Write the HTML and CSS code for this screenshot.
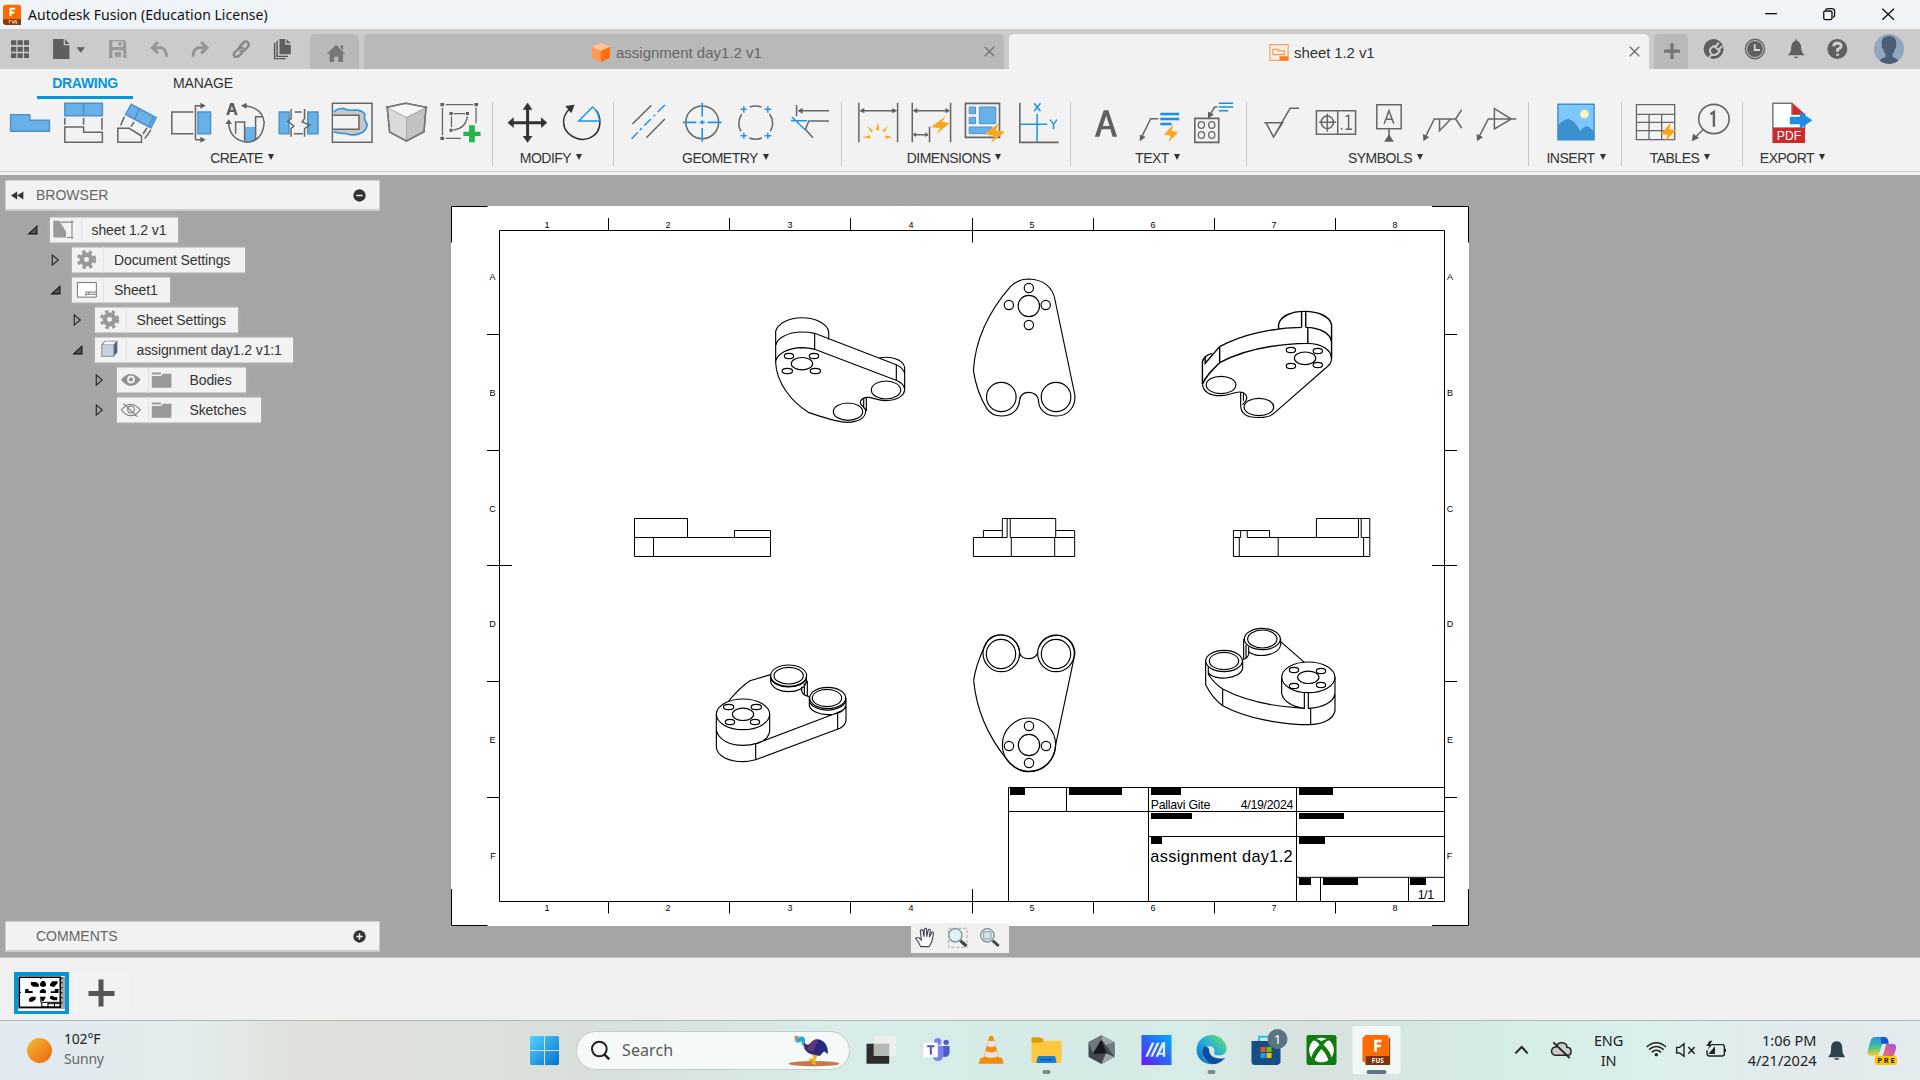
FILE: index.html
```html
<!DOCTYPE html>
<html lang="en">
<head>
<meta charset="utf-8">
<title>Autodesk Fusion (Education License)</title>
<link rel="stylesheet" href="styles.css">
</head>
<body>
<header class="titlebar">
  <svg class="ic app" viewBox="8 10 43 62" preserveAspectRatio="none"><path class="n" fill="#ff6a00" d="M8 16L14 12H46Q51 12 51 17V68Q51 72 46 72H14L8 66Z"/><path class="n" fill="#8a3b08" d="M13 54H51V72H13L8 67V56Z"/><path stroke="#fff" stroke-width="2" d="M26 46V24H37M26 35H35"/><path stroke="#e9c9b4" stroke-width="1" d="M23 58V67M23 59H28M31 58V66H35V58M41 59H38V63H41V67H38"/></svg>
  <span class="title">Autodesk Fusion (Education License)</span>
  <svg class="ic wc" viewBox="1157.6 0 133.7 87" preserveAspectRatio="none"><path d="M1211 41H1238"/></svg>
  <svg class="ic wc" viewBox="1291.3 0 133.7 87" preserveAspectRatio="none"><rect x="1346" y="33" width="19" height="26" rx="4"/><path d="M1350 30Q1351 26 1356 26H1364Q1371 26 1371 34V46Q1371 51 1367 53"/></svg>
  <svg class="ic wc" viewBox="1425 0 133.7 87" preserveAspectRatio="none"><path d="M1481 26L1508 59M1508 26L1481 59"/></svg>
</header>

<nav class="tabbar">
  <svg class="ic q" style="width:40px" viewBox="0 87 98 120" preserveAspectRatio="none"><g class="n dk"><path d="M27 121h13v14H27zM43 121h13v14H43zM59 121h12v14H59zM27 140h13v15H27zM43 140h13v15H43zM59 140h12v15H59zM27 160h13v14H27zM43 160h13v14H43zM59 160h12v14H59z"/></g></svg>
  <svg class="ic q" style="width:56px" viewBox="98 87 137 120" preserveAspectRatio="none"><path class="n dk" d="M130 117H156V136H170V177H130ZM159 117L170 132H159ZM187 142H208L198 158Z"/></svg>
  <svg class="ic q" style="width:43px" viewBox="235 87 105 120" preserveAspectRatio="none"><path class="n" fill="#999" fill-rule="evenodd" d="M267 120H304L309 127V174H267ZM275 124V141H301V124ZM275 151V174H302V151ZM290 126H297V138H290ZM281 156H296V170H281Z"/></svg>
  <svg class="ic q" style="width:41px" viewBox="340 87 100 120" preserveAspectRatio="none"><path stroke="#959595" stroke-width="3" d="M386 126L373 143L386 160M374 143H394Q407 148 407 170"/></svg>
  <svg class="ic q" style="width:40px" viewBox="441 87 98 120" preserveAspectRatio="none"><path stroke="#959595" stroke-width="3" d="M493 126L507 143L493 160M506 143H486Q473 148 473 170"/></svg>
  <svg class="ic q" style="width:42px" viewBox="539 87 103 120" preserveAspectRatio="none"><path stroke="#888" stroke-width="2.4" d="M586 141L597 127Q603 122 608 128Q612 134 607 141L598 152Q592 157 587 150M597 147Q592 139 585 145L576 156Q570 163 575 169Q581 173 586 167L594 157"/></svg>
  <svg class="ic q" style="width:48px" viewBox="642 87 118 120" preserveAspectRatio="none"><path class="n dk" d="M685 117H699V134H713V163H685ZM702 117L713 130H702Z"/><path stroke="#555" stroke-width="1.4" d="M679 122V169H706M673 128V176H700"/></svg>
  <div class="tab home"><svg class="ic q" style="width:49px" viewBox="759 87 120 120" preserveAspectRatio="none"><path class="n" fill="#777" d="M823 134L845 161H840V186H828V170H818V186H807V161H800ZM834 136H840V150L834 144Z"/></svg></div>
  <div class="tab t1"><svg class="ic cube" viewBox="1451 131 43 57" preserveAspectRatio="none"><path class="n" fill="#ffc49a" d="M1451 143L1472 131L1494 143L1472 155Z"/><path class="n" fill="#ff9a50" d="M1451 143L1472 155V188L1451 175Z"/><path class="n" fill="#ff6d05" d="M1494 143L1472 155V188L1494 175Z"/></svg><span>assignment day1.2 v1</span><svg class="ic x" viewBox="0 0 12 12"><path d="M.8.8L11.2 11.2M11.2.8L.8 11.2"/></svg></div>
  <div class="tab t2"><svg class="ic sheet" viewBox="67 134 46 50" preserveAspectRatio="none"><rect x="69" y="136" width="42" height="46" fill="#fbeee4" stroke="#f7a267" stroke-width="1.2"/><path stroke="#f39a55" stroke-width="1.2" d="M76 150H88V154H102V165H76Z"/><path class="n" fill="#ff7d1e" d="M91 170H111V182H91Z"/></svg><span>sheet 1.2 v1</span><svg class="ic x" viewBox="0 0 12 12"><path d="M.8.8L11.2 11.2M11.2.8L.8 11.2"/></svg></div>
  <div class="tab plus"><svg class="ic q" style="width:34px" viewBox="955 87 78.4 120" preserveAspectRatio="none"><path stroke="#777" stroke-width="3.4" d="M978 153.500H1015M996.500 130V177"/></svg></div>
  <svg class="ic q first" style="width:42px" viewBox="1044.6 87 96.8 120" preserveAspectRatio="none"><ellipse class="n dk" cx="1092" cy="147" rx="23" ry="30"/><path stroke="#cbcbcb" stroke-width="2" d="M1078 178L1088 163Q1080 153 1086 144L1093 138L1106 153L1101 161Q1094 168 1088 163M1096 141L1104 128M1103 150L1112 138"/></svg>
  <svg class="ic q" style="width:41px" viewBox="1141.500 87 94.5 120" preserveAspectRatio="none"><ellipse cx="1187.500" cy="147" rx="22" ry="29" stroke="#666"/><ellipse class="n dk" cx="1187.500" cy="147" rx="18" ry="24"/><path stroke="#d8d8d8" stroke-width="1.8" d="M1187 133V150H1199"/></svg>
  <svg class="ic q" style="width:41px" viewBox="1236 87 94.5 120" preserveAspectRatio="none"><path class="n dk" d="M1263 166Q1271 158 1271 142Q1272 125 1280 123Q1280 118 1282.500 118Q1285 118 1285 123Q1293 126 1294 142Q1294 158 1302 166ZM1277 170H1288Q1283 180 1277 170Z"/></svg>
  <svg class="ic q" style="width:41px" viewBox="1330.6 87 94.5 120" preserveAspectRatio="none"><ellipse class="n dk" cx="1377.500" cy="147" rx="23" ry="30"/><path stroke="#d0d0d0" stroke-width="3" d="M1369 139Q1370 129 1378 129Q1387 130 1386 139Q1385 145 1378 149V155M1378 161V167"/></svg>
  <svg class="ic avatar" viewBox="0 0 30 30"><defs><clipPath id="av"><circle cx="15" cy="15" r="15"/></clipPath></defs><circle class="n" cx="15" cy="15" r="15" fill="#91a6bf"/><g clip-path="url(#av)"><path class="n" fill="#4c5d76" d="M15 2C21 2 23 6 22 11Q23 14 21 15Q20 19 18.500 20V23Q25 25 27 31H3Q5 25 11.500 23V20Q10 19 9 15Q7 14 8 11C7 6 9 2 15 2Z"/></g></svg>
</nav>

<section class="ribbon">
  <div class="modes"><span class="mode on">DRAWING</span><span class="mode">MANAGE</span></div>
  <div class="groups">
    <div class="group g-create"><div class="icons">
      <svg class="ic" viewBox="24.5 306 98 126" preserveAspectRatio="none"><path fill="#67b0e8" stroke="#4f93c6" d="M26 344H73V361H121V394H26Z"/></svg>
      <svg class="ic" viewBox="156 306 98 126" preserveAspectRatio="none"><path fill="#67b0e8" stroke="#4f93c6" d="M158 310H250V347H158ZM204 310V347"/><path d="M158 354V374M204 354V374M249 354V389M158 381H204V397H250V427H158Z"/></svg>
      <svg class="ic" viewBox="288 306 98 126" preserveAspectRatio="none"><path fill="#67b0e8" stroke="#4f93c6" d="M323 313L384 353L371 384L309 343ZM343 326L331 358M378 350L366 379"/><path d="M306 350L297 376M330 366L322 380M361 384L352 402M371 390L356 416M290 385H318L348 408V427H290Z"/></svg>
      <svg class="ic" viewBox="419 306 98 126" preserveAspectRatio="none"><path fill="#67b0e8" stroke="#4f93c6" d="M485 336H516V401H485Z"/><path d="M474 336H421V401H474M479 419V317H493M479 419H493"/><path class="n dk" d="M491 308L504 317L491 326ZM491 410L504 419L491 428Z"/></svg>
      <svg class="ic" viewBox="551 306 98 126" preserveAspectRatio="none"><path class="n" fill="#67b0e8" d="M599 381H626V422Q613 430 599 424Z"/><path d="M599 423V366H577V401M626 421V350H643M601 317Q643 324 647 367Q645 423 604 427Q562 418 560 370"/><path class="n dk" d="M604 308L590 317L604 326ZM552 372L560 358L568 372ZM554 345L564 309H572L582 345H575L573 336H563L561 345ZM565 329H571L568 317Z"/></svg>
      <svg class="ic" viewBox="682 306 98 126" preserveAspectRatio="none"><path fill="#67b0e8" stroke="#4f93c6" d="M685 336H709V401H685ZM755 336H780V401H755Z"/><path d="M714 327V356L706 364L721 378L714 385V410M747 327V356L741 366L760 375L747 386V410M723 336H740M721 401H743"/></svg>
      <svg class="ic" viewBox="814 306 98 126" preserveAspectRatio="none"><rect x="815" y="310" width="97" height="117"/><path fill="#c8c8c8" stroke="#2793e6" stroke-width="1.6" d="M818 336Q829 324 844 326Q856 333 870 330Q890 330 895 345Q890 354 900 372Q900 384 892 394Q872 411 850 401Q830 400 818 396"/><path fill="#f2f2f2" d="M817 346H880V388H817"/></svg>
      <svg class="ic" viewBox="945 306 98 126" preserveAspectRatio="none"><path fill="#f7f7f7" d="M948 322L993 310L1043 322L995 353Z"/><path fill="#d9d9d9" d="M948 322L995 353V423L954 396Z"/><path fill="#bdbdbd" d="M1043 322L995 353V423L1038 395Z"/><path class="n" fill="#f7f7f7" d="M950 323L993 312L1041 323L995 352Z"/><path class="n" fill="#dadada" d="M950 324L995 353V421L956 396Z"/><path class="n" fill="#c2c2c2" d="M1041 324L995 353V421L1036 395Z"/><path stroke="#777" d="M948 322L993 310L1043 322L1038 395L995 423L954 396Z"/></svg>
      <svg class="ic" viewBox="1077 306 105 126" preserveAspectRatio="none" style="width:43px"><path d="M1091 314H1158M1083 323V406M1091 415H1128M1165 323V370M1105 349V381M1110 341H1138M1144 349Q1140 385 1110 390" stroke-width="1.3"/><path class="n dk" d="M1078 309h9v10h-9zM1161 309h9v10h-9zM1078 410h9v10h-9zM1100 336h8v9h-8zM1140 336h8v9h-8zM1100 386h8v9h-8z"/><path class="n" fill="#27b24a" d="M1148 376H1162V395H1176V408H1162V427H1148V408H1134V395H1148Z"/></svg>
    </div><span class="label">CREATE</span></div>
    <div class="group g-modify"><div class="icons">
      <svg class="ic" viewBox="1245 306 98 126" preserveAspectRatio="none"><path stroke="#333" stroke-width="3" d="M1254 368H1332M1293 322V414"/><path class="n" fill="#333" d="M1293 308L1305 329H1281ZM1293 428L1305 408H1281ZM1244 368L1259 352V384ZM1341 368L1326 352V384Z"/></svg>
      <svg class="ic" viewBox="1376 306 98 126" preserveAspectRatio="none"><path stroke="#333" stroke-width="1.6" d="M1459 330C1472 350 1475 390 1450 410C1425 430 1390 410 1382 382C1376 355 1385 335 1397 325"/><path class="n" fill="#333" d="M1384 318L1407 314L1399 340Z"/><path stroke="#1f93ea" d="M1451 321L1417 363H1468Q1466 335 1451 321Z"/></svg>
    </div><span class="label">MODIFY</span></div>
    <div class="group g-geo"><div class="icons">
      <svg class="ic" viewBox="66.5 306 95 126" preserveAspectRatio="none"><path d="M77 372L122 316M110 413L154 357"/><path stroke="#1f93ea" stroke-width="1.500" d="M75 416L90 397M95 390L99 384M105 377L121 357M127 349L131 344M137 336L154 315"/></svg>
      <svg class="ic" viewBox="194 306 95 126" preserveAspectRatio="none"><ellipse cx="242" cy="367" rx="39" ry="49"/><path stroke="#1f93ea" stroke-width="1.6" d="M242 308V350M242 361V373M242 384V425M196 367H228M236 367H248M255 367H288"/></svg>
      <svg class="ic" viewBox="322 306 95 126" preserveAspectRatio="none"><path d="M357 321Q371 315 385 321M404 342Q418 368 406 394M386 414Q371 421 356 414M336 394Q325 368 338 342"/><path stroke="#1f93ea" d="M343 319V338M335 328H350M400 319V338M392 328H408M343 398V416M335 407H350M400 398V416M392 407H408"/></svg>
      <svg class="ic" viewBox="449 306 95 126" preserveAspectRatio="none"><path d="M467 315V349M472 332H544M544 363H496L488 388L506 413"/><path class="n dk" d="M470 332L481 323V341Z"/><path stroke="#1f93ea" d="M454 362H492M456 351L487 389"/></svg>
    </div><span class="label">GEOMETRY</span></div>
    <div class="group g-dim"><div class="icons">
      <svg class="ic" viewBox="612 306 95 126" preserveAspectRatio="none"><path d="M614 308V427M706 308V427M622 332H698"/><path class="n dk" d="M615 332L627 324V340ZM705 332L693 324V340Z"/><path class="n" fill="#faa61a" d="M655 391L659 366L663 391ZM634 377L648 392L643 397ZM684 377L669 392L674 397ZM623 412L641 406V416ZM694 412L677 406V416Z"/></svg>
      <svg class="ic" viewBox="739 306 95 126" preserveAspectRatio="none"><path d="M742 308V427M833 308V427M783 380V427M750 332H826M748 404H778"/><path class="n dk" d="M743 332L754 324V340ZM832 332L821 324V340ZM743 404L751 397V411ZM781 404L773 397V411Z"/><path class="n" fill="#faa61a" d="M822 348L786 382L808 384L799 403L831 369L812 366Z"/></svg>
      <svg class="ic" viewBox="867 306 95 126" preserveAspectRatio="none"><rect x="868" y="310" width="81" height="102" stroke-width="1.6"/><path fill="#67b0e8" stroke="#4f93c6" stroke-width="1" d="M877 321H892V341H877ZM901 321H940V371H901ZM877 352H892V371H877ZM877 381H932L918 401H877Z"/><path class="n" fill="#faa61a" d="M948 369L913 402L936 407L929 428L962 395L940 391Z"/></svg>
      <svg class="ic" viewBox="995 306 95 126" preserveAspectRatio="none"><path d="M997 308V427H1089" stroke-width="1.6"/><path stroke="#1f93ea" stroke-width="1.500" d="M1038 342V427M998 373H1062M1031 310L1046 334M1046 310L1031 334M1069 359L1077 373L1085 359M1077 373V388"/></svg>
    </div><span class="label">DIMENSIONS</span></div>
    <div class="group g-text"><div class="icons">
      <svg class="ic" viewBox="1155 306 95 126" preserveAspectRatio="none"><path class="n dk" fill-rule="evenodd" d="M1176 410L1197 331H1208L1229 410H1218L1213 388H1192L1187 410ZM1195 378H1211L1203 347Z"/></svg>
      <svg class="ic" viewBox="1282 306 98 126" preserveAspectRatio="none" style="width:41px"><path d="M1288 412L1310 356H1328"/><path class="n dk" d="M1284 424L1284 404L1298 411Z"/><path stroke="#1192ee" stroke-width="2.300" d="M1333 342H1378M1333 357H1378M1333 372H1360"/><path class="n" fill="#faa61a" d="M1364 373L1342 404L1358 407L1352 427L1376 396L1360 393Z"/></svg>
      <svg class="ic" viewBox="1410 306 97 126" preserveAspectRatio="none"><rect x="1412" y="355" width="58" height="72" stroke-width="1.6"/><g stroke-width="1.300"><ellipse cx="1428" cy="375" rx="7.500" ry="10"/><ellipse cx="1453" cy="375" rx="7.500" ry="10"/><ellipse cx="1428" cy="405" rx="7.500" ry="10"/><ellipse cx="1453" cy="405" rx="7.500" ry="10"/></g><path d="M1449 344L1460 321H1467"/><path class="n dk" d="M1444 356L1444 335L1458 343Z"/><path stroke="#1192ee" d="M1470 310H1505M1470 321H1505M1470 332H1493"/></svg>
    </div><span class="label">TEXT</span></div>
    <div class="group g-sym"><div class="icons">
      <svg class="ic" viewBox="49.6 306 92 126" preserveAspectRatio="none"><path d="M55 368H97L76 411L60 371M76 411L114 325H135"/></svg>
      <svg class="ic" viewBox="173 306 92 126" preserveAspectRatio="none"><path d="M174 332H264V403H174ZM223 332V403M199 341V395M180 367H219M241 350L248 346V388M241 388H256M232 383V389"/><ellipse cx="199" cy="367" rx="14" ry="19"/></svg>
      <svg class="ic" viewBox="297 306 92 126" preserveAspectRatio="none"><path d="M315 314H371V386H315ZM343 386V412M332 371L343 332L354 371M336 358H350"/><path class="n dk" d="M343 403L354 425H332Z"/></svg>
      <svg class="ic" viewBox="421 306 92 126" preserveAspectRatio="none"><path d="M426 412L447 357H496L510 329M496 357L510 384M459 357V392L485 357"/><path class="n dk" d="M422 424L421 402L435 411Z"/></svg>
      <svg class="ic" viewBox="545 306 92 126" preserveAspectRatio="none"><path d="M549 412L571 357H635M585 326L624 357L585 387Z"/><path class="n dk" d="M545 424L544 402L559 411Z"/></svg>
    </div><span class="label">SYMBOLS</span></div>
    <div class="group g-ins"><div class="icons">
      <svg class="ic" viewBox="727.5 306 92 126" preserveAspectRatio="none"><rect x="732" y="313" width="83" height="106" fill="#80c8fb" stroke="#3d91c9"/><path class="n" fill="#3d91cf" d="M732 376Q745 357 757 357Q772 362 783 394Q793 375 803 380L815 394V420H732Z"/><ellipse class="n" cx="793" cy="342" rx="10" ry="13" fill="#fff4be"/></svg>
    </div><span class="label">INSERT</span></div>
    <div class="group g-tab"><div class="icons">
      <svg class="ic" viewBox="913 306 92 126" preserveAspectRatio="none"><path stroke-width="1.300" d="M914 314H1002V419H914ZM914 343H1002M914 367H1002M914 392H1002M943 343V419M972 343V419"/><path class="n" fill="#faa61a" d="M993 368L970 402L986 405L979 425L1005 391L990 388Z"/></svg>
      <svg class="ic" viewBox="1037 306 92 126" preserveAspectRatio="none"><ellipse cx="1092" cy="357" rx="35" ry="44" stroke-width="1.6"/><path d="M1068 388L1048 413"/><path stroke-width="2.400" d="M1084 343L1092 336V380"/><path class="n dk" d="M1041 424L1044 401L1058 414Z"/></svg>
    </div><span class="label">TABLES</span></div>
    <div class="group g-exp"><div class="icons">
      <svg class="ic" viewBox="1227 306 92 126" preserveAspectRatio="none"><path fill="#fff" stroke="#777" d="M1229 384V310H1273V343H1302V384Z"/><path class="n" fill="#cf2a2a" d="M1274 309L1303 343H1274ZM1228 384H1303V429H1228Z"/><path class="n" fill="#1f8fe6" d="M1268 350H1291V336L1320 361L1291 386V373H1268Z"/><text x="1238" y="420" fill="#fff" font-size="38" textLength="56" lengthAdjust="spacingAndGlyphs">PDF</text></svg>
    </div><span class="label">EXPORT</span></div>
  </div>
</section>

<main class="canvas">
  <aside class="side">
    <div class="panel browser"><svg class="ic rew" viewBox="34 50 40 26"><path class="n" fill="#333" d="M53 51V75L34 63ZM72 51V75L53 63Z"/></svg><span>BROWSER</span><svg class="ic dot" viewBox="0 0 12 12"><circle class="n" cx="6" cy="6" r="5.700" fill="#333"/><path stroke="#eee" stroke-width="1.500" d="M3 6H9"/></svg></div>
    <div class="tree">
      <div class="row l0"><svg class="ic ar" viewBox="0 0 10 10"><path fill="#555" stroke="#111" d="M9 1.500V8.500H1.500Z"/></svg><div class="node" style="width:128px"><svg class="ic ni" viewBox="152 127 93 77"><path class="n" fill="#999" d="M162 138H180L200 170V188H162Z"/><path stroke="#888" stroke-width="1.100" d="M184 142H222M218 136V192M203 188H222"/></svg><span>sheet 1.2 v1</span></div></div>
      <div class="row l1"><svg class="ic ar" viewBox="0 0 9 13"><path stroke="#222" d="M1 1L7.500 6.500L1 12Z"/></svg><div class="node" style="width:173px"><svg class="ic ni" viewBox="212 217 98 77"><ellipse stroke="#999" stroke-width="4.500" cx="258" cy="254" rx="15" ry="15"/><circle stroke="#999" stroke-width="3.500" stroke-dasharray="3.270" cx="258" cy="254" r="25"/></svg><span>Document Settings</span></div></div>
      <div class="row l1"><svg class="ic ar" viewBox="0 0 10 10"><path fill="#555" stroke="#111" d="M9 1.500V8.500H1.500Z"/></svg><div class="node" style="width:98px"><svg class="ic ni" viewBox="212 307 98 77"><rect x="229" y="322" width="60" height="46" fill="#fff" stroke="#777" stroke-width="1"/><path stroke="#777" stroke-width="1" d="M256 365V352H289M256 359H289M265 352V359"/></svg><span>Sheet1</span></div></div>
      <div class="row l2"><svg class="ic ar" viewBox="0 0 9 13"><path stroke="#222" d="M1 1L7.500 6.500L1 12Z"/></svg><div class="node" style="width:143px"><svg class="ic ni" viewBox="212 217 98 77"><ellipse stroke="#999" stroke-width="4.500" cx="258" cy="254" rx="15" ry="15"/><circle stroke="#999" stroke-width="3.500" stroke-dasharray="3.270" cx="258" cy="254" r="25"/></svg><span>Sheet Settings</span></div></div>
      <div class="row l2"><svg class="ic ar" viewBox="0 0 10 10"><path fill="#555" stroke="#111" d="M9 1.500V8.500H1.500Z"/></svg><div class="node" style="width:198px"><svg class="ic ni" viewBox="280 487 98 77"><path class="n" fill="#788" d="M300 508L310 496H351V533L340 547H300Z"/><path class="n" fill="#f4f6fa" d="M304 508L312 499H347L339 508Z"/><path class="n" fill="#c8cfdf" d="M303 510H338V544H303Z"/><path class="n" fill="#566170" d="M341 508L349 499V532L341 543Z"/></svg><span>assignment day1.2 v1:1</span></div></div>
      <div class="row l3"><svg class="ic ar" viewBox="0 0 9 13"><path stroke="#222" d="M1 1L7.500 6.500L1 12Z"/></svg><div class="node f" style="width:129px"><svg class="ic ni" viewBox="352 577 93 77"><path class="n" fill="#909090" d="M364 615Q393 580 423 615Q393 652 364 615Z"/><circle cx="394" cy="614" r="9" stroke="#f2f2f2" stroke-width="1.800" fill="#909090"/></svg><svg class="ic fo" viewBox="445 577 98 77"><path class="n" fill="#999" d="M457 603H486L492 596H519V640H457ZM457 592H486V598H457Z"/></svg><span>Bodies</span></div></div>
      <div class="row l3"><svg class="ic ar" viewBox="0 0 9 13"><path stroke="#222" d="M1 1L7.500 6.500L1 12Z"/></svg><div class="node f" style="width:144px"><svg class="ic ni" viewBox="352 577 93 77"><path stroke="#8a8a8a" stroke-width="1.200" d="M365 615Q393 582 422 615Q393 650 365 615ZM371 596L414 636"/><circle cx="394" cy="614" r="10" stroke="#8a8a8a" stroke-width="1.200"/></svg><svg class="ic fo" viewBox="445 577 98 77"><path class="n" fill="#999" d="M457 603H486L492 596H519V640H457ZM457 592H486V598H457Z"/></svg><span>Sketches</span></div></div>
    </div>
    <div class="panel comments"><span>COMMENTS</span><svg class="ic dot" viewBox="0 0 12 12"><circle class="n" cx="6" cy="6" r="5.700" fill="#333"/><path stroke="#eee" stroke-width="1.500" d="M3 6H9M6 3V9"/></svg></div>
  </aside>

  <svg class="ic paper" viewBox="451 206 1018 720">
    <g class="frame">
      <path d="M451.500 242.500V206.500H487.500M1432 206.500H1468.500V242.500M451.500 889V925.500H487.500M1432 925.500H1468.500V889"/>
      <rect x="499.500" y="230.500" width="945" height="671"/>
      <path d="M608.500 218V230.500M729.500 218V230.500M850.500 218V230.500M972.500 218V242.500M1093.500 218V230.500M1214.500 218V230.500M1335.500 218V230.500M608.500 901V913.500M729.500 901V913.500M850.500 901V913.500M972.500 889V913.500M1093.500 901V913.500M1214.500 901V913.500M1335.500 901V913.500"/>
      <path d="M487 334.500H499.500M487 450.500H499.500M487 565.500H512M487 681.500H499.500M487 797.500H499.500M1444.500 334.500H1457M1444.500 450.500H1457M1432 565.500H1457M1444.500 681.500H1457M1444.500 797.500H1457"/>
    </g>
    <g class="marks">
      <text x="547" y="227.500">1</text><text x="668" y="227.500">2</text><text x="790" y="227.500">3</text><text x="911" y="227.500">4</text><text x="1032" y="227.500">5</text><text x="1153" y="227.500">6</text><text x="1274" y="227.500">7</text><text x="1395" y="227.500">8</text>
      <text x="547" y="911">1</text><text x="668" y="911">2</text><text x="790" y="911">3</text><text x="911" y="911">4</text><text x="1032" y="911">5</text><text x="1153" y="911">6</text><text x="1274" y="911">7</text><text x="1395" y="911">8</text>
      <text x="492.500" y="279.500">A</text><text x="492.500" y="395.500">B</text><text x="492.500" y="511.500">C</text><text x="492.500" y="626.500">D</text><text x="492.500" y="742.500">E</text><text x="493" y="858.500">F</text>
      <text x="1450" y="279.500">A</text><text x="1450" y="395.500">B</text><text x="1450" y="511.500">C</text><text x="1450" y="626.500">D</text><text x="1450" y="742.500">E</text><text x="1449.500" y="858.500">F</text>
    </g>
    <!-- underside isometric, left and front elevation -->
    <g transform="translate(440 190) scale(.33333)">
      <path d="M1007 518V425A80 47 0 0 1 1166 425V449M1007 468A80 43 0 0 1 1086 426Q1106 426 1124 430L1369 524M1124 430V478M1007 518A80 46 0 0 1 1086 473Q1106 474 1124 478L1372 572M1369 524V571M1007 518C1010 580 1055 635 1105 667C1150 682 1190 697 1222 697C1255 696 1276 684 1277 664C1278 650 1262 650 1261 638C1261 628 1270 623 1282 622C1298 621 1310 632 1338 632C1370 631 1394 618 1394 598C1393 585 1385 578 1372 572M1394 532V600M1317 504C1345 498 1388 505 1394 532M1369 524C1382 530 1392 538 1394 552M1279 622V664M1271 624V655"/>
      <ellipse cx="1086" cy="521" rx="32" ry="18.500"/><ellipse cx="1047" cy="498" rx="14" ry="8"/><ellipse cx="1122" cy="498" rx="14" ry="8"/><ellipse cx="1042" cy="543" rx="15.500" ry="8"/><ellipse cx="1126" cy="543" rx="15.500" ry="8"/><ellipse cx="1338" cy="600" rx="44" ry="27"/><ellipse cx="1224" cy="665" rx="44" ry="26"/>
      <path class="c" d="M583.500 1042.500V985.500H742.500V1042.500M583.500 1042.500H991.500M583.500 1042.500V1099.500H991.500V1021.500H883.500V1042.500M640.500 1042V1099"/>
    </g>
    <!-- plan, right isometric and side elevations -->
    <g transform="translate(940 190) scale(.34439 .33333)">
      <path d="M97 541C103 440 145 360 205 289C225 270 240 267 258 267C300 268 328 292 334 330L391 612C396 650 372 678 338 678C308 678 287 660 286 632C285 618 275 607 258 607C241 607 232 618 231 632C229 660 208 678 178 678C160 678 145 670 136 656C115 620 103 585 97 541Z"/>
      <ellipse cx="258" cy="294" rx="13.500" ry="14"/><ellipse cx="200" cy="345" rx="13.500" ry="14"/><ellipse cx="307" cy="345" rx="13.500" ry="14"/><ellipse cx="258" cy="405" rx="13.500" ry="14"/><ellipse cx="258" cy="348" rx="31" ry="32"/><ellipse cx="178" cy="621" rx="43" ry="44"/><ellipse cx="337" cy="621" rx="43" ry="44"/>
      <path class="k" d="M983 418V404C988 378 1020 364 1059 364C1100 364 1132 380 1137 404V505M1050 364V412M1062 364V412M812 470C880 432 970 413 1050 412M1062 412C1105 413 1135 430 1137 457M1068 412V460M812 518C880 480 970 462 1068 460M812 470V518M812 518C790 540 770 560 762 583V515C765 503 772 495 790 490M770 498V520L812 470"/>
      <path d="M1068 460C1110 461 1135 480 1137 505C1137 520 1130 525 1120 534L972 668C955 687 900 686 885 673C874 665 873 655 873 645V607M881 609V632M762 583C765 605 785 617 815 617C840 617 850 606 870 606C885 606 893 617 890 628C888 636 880 638 879 645"/>
      <ellipse cx="1060" cy="505" rx="31" ry="19"/><ellipse cx="1019" cy="480" rx="13.500" ry="8"/><ellipse cx="1097" cy="483" rx="13.500" ry="8"/><ellipse cx="1019" cy="528" rx="13.500" ry="8"/><ellipse cx="1097" cy="525" rx="13.500" ry="8"/><ellipse cx="816" cy="585" rx="43" ry="26"/><ellipse cx="926" cy="651" rx="43" ry="26"/>
      <path class="c" d="M97 1042.500H195V985M204 985V1042.500H391V1099.500H97V1042M181 1042V985.500H336V1042M126 1042V1021.500H181M336 1021.500H391V1042M207 1042V1099M333 1042V1099"/>
      <path class="c" d="M852 1021V1099.500H1248V985.500H1093V1042M852 1021.500H957V1042M852 1042.500H873V1021M892 1021V1042.500H1215V985M1223 985V1042.500H1248M869 1042V1099M982 1042V1099M1230 1042V1099"/>
    </g>
    <!-- lower left isometric and bottom plan -->
    <g transform="translate(600 600) scale(.33333)">
      <path d="M349 343V440C350 470 390 485 430 485C445 485 455 482 467 479L720 385C732 378 738 370 738 360V294M509 343V394C505 415 490 425 470 431M349 390C355 420 390 436 430 436C445 436 458 434 470 430L712 338Q735 330 738 318M467 432V479M713 338V386M512 227V245C520 285 612 285 619 245V227M512 233A54 31 0 0 0 619 235M628 293V318C640 350 725 355 737 318M628 299A54 31 0 0 0 737 299M386 303C405 280 430 255 450 242L512 224M605 260V272C608 285 615 286 628 290M613 250V285M622 242V287"/>
      <ellipse cx="429" cy="343" rx="80" ry="46"/><ellipse cx="429" cy="343" rx="32" ry="18.500"/><ellipse cx="386" cy="321" rx="15.500" ry="8"/><ellipse cx="469" cy="321" rx="15.500" ry="8"/><ellipse cx="390" cy="366" rx="14" ry="8"/><ellipse cx="465" cy="366" rx="14" ry="8"/><ellipse cx="566" cy="227" rx="54" ry="32"/><ellipse cx="566" cy="227" rx="44" ry="25"/><ellipse cx="683" cy="294" rx="54" ry="32"/><ellipse cx="681" cy="294" rx="44" ry="26"/>
      <path d="M1121 241C1127 200 1140 170 1150 148L1163 122M1258 158C1262 170 1272 176 1286 176C1300 176 1308 170 1314 158M1425 160L1367 435M1121 241C1130 340 1170 415 1218 475C1240 505 1265 515 1287 515C1335 515 1362 480 1367 435M1163 122C1185 93 1245 98 1258 150M1318 140C1335 92 1420 92 1425 160"/>
      <circle cx="1204" cy="160" r="55"/><circle cx="1203" cy="162" r="44"/><circle cx="1368" cy="160" r="55"/><circle cx="1368" cy="162" r="44"/><circle cx="1287" cy="434" r="80"/><circle cx="1287" cy="435" r="32"/><circle cx="1287" cy="378" r="14"/><circle cx="1227" cy="438" r="14"/><circle cx="1338" cy="438" r="14"/><circle cx="1287" cy="489" r="14"/>
    </g>
    <!-- lower right isometric and title block -->
    <g transform="translate(980 600) scale(.33333)">
      <ellipse cx="847" cy="117" rx="54" ry="32"/><ellipse cx="847" cy="117" rx="44" ry="27"/><ellipse cx="732" cy="183" rx="55" ry="32"/><ellipse cx="732" cy="183" rx="44" ry="26"/><ellipse cx="985" cy="232" rx="80" ry="46"/><ellipse cx="985" cy="232" rx="32" ry="18.500"/><ellipse cx="942" cy="210" rx="14" ry="8"/><ellipse cx="1023" cy="213" rx="14" ry="8"/><ellipse cx="942" cy="258" rx="14" ry="8"/><ellipse cx="1023" cy="255" rx="14" ry="8"/>
      <path d="M791 117V176M798 135V176M806 140V162C804 174 797 177 788 179M902 117V135C895 168 825 176 806 155M788 183V205C780 240 700 243 685 218M677 183V254C690 280 705 300 728 317C800 355 900 374 992 374C1035 372 1060 355 1065 333V232M685 200V222C695 240 710 255 728 267C800 305 880 320 973 325M728 267V317M902 125L973 187M905 232V280C910 305 940 322 973 325V278M985 278V325C1030 324 1062 305 1065 280M992 326V374"/>
      <path class="c" d="M85.500 904.500V562.500H1393M259.500 562V634.500M505.500 562V904M949.500 562V904M85.500 634.500H1393M505.500 709.500H1393M949.500 832H1393M1021.500 832V904M1285.500 832V904"/>
      <path class="n" fill="#000" d="M90 564h45v21h-45zM267 564h159v21h-159zM513 564h90v21h-90zM957 564h102v21h-102zM513 639h123v18h-123zM957 639h135v18h-135zM513 711h33v21h-33zM957 711h78v21h-78zM957 834h36v21h-36zM1029 834h105v21h-105zM1290 834h48v21h-48z"/>
      <g fill="#000" stroke="none"><text x="512" y="627" font-size="37" textLength="179">Pallavi Gite</text><text x="782" y="627" font-size="37" textLength="158">4/19/2024</text><text x="511" y="786" font-size="49" textLength="427">assignment day1.2</text><text x="1313" y="897" font-size="37" textLength="49">1/1</text></g>
    </g>
  </svg>

  <div class="viewnav">
    <svg class="ic" viewBox="933 969 87 90"><path fill="#fbfdff" stroke="#445" stroke-width="1.100" d="M962 1040Q958 1028 947 1015Q952 1008 964 1020L961 992Q966 985 969 993L972 1010L973 988Q978 982 980 988V1010L985 990Q990 985 991 992L988 1012L996 996Q1001 995 1000 1000Q998 1025 987 1040Z"/></svg>
    <svg class="ic" viewBox="1028 969 87 90"><rect x="1045" y="985" width="55" height="57" stroke="#aaa" stroke-width="1" stroke-dasharray="3 2"/><path stroke="#444" stroke-width="3.200" d="M1080 1022L1098 1038"/><circle cx="1065" cy="1006" r="20" fill="#e2f1f1" stroke="#7c9090" stroke-width="1.300"/></svg>
    <svg class="ic" viewBox="1124 969 87 90"><path stroke="#444" stroke-width="2.800" d="M1177 1022L1195 1038"/><circle cx="1161" cy="1006" r="20" fill="#e2f1f1" stroke="#7c9090" stroke-width="1.300"/><rect x="1150" y="995" width="22" height="22" fill="#d8e2e2" stroke="#8a9a9a" stroke-width="1"/></svg>
  </div>
</main>

<section class="sheets">
  <div class="thumb"><svg class="ic" viewBox="52 228 138 105" preserveAspectRatio="none"><path class="n" fill="#a5a5a5" d="M52 230H190V327H52Z"/><path fill="#fff" stroke="#000" d="M56 232H176V322H56Z"/><path class="n" fill="#000" d="M90 246H105L113 252V260H97L90 255ZM117 250L122 243H129L134 250V258L126 261L117 258ZM146 252L153 244H168V250L158 261L146 258ZM73 267H83V273H95V279H73ZM118 271L123 267H128L134 272V279H116V274ZM148 274H160V267H171V279H148ZM84 296L92 290H104V298L94 305H85ZM116 290H134L127 303H122ZM146 289L154 287L158 291H167V301H156L146 296ZM176 233h7v3h-7zM176 247h7v3h-7zM176 262h7v3h-7zM176 277h7v3h-7zM176 292h7v3h-7zM176 307h7v3h-7z"/><path stroke="#000" stroke-width="1" d="M119 295V307H176M122 308V321H176M140 307V321M159 307V321M140 311H176M119 232V237M57 277H61"/></svg></div>
  <div class="add"><svg class="ic" viewBox="0 0 28 28"><path stroke="#555" stroke-width="5" d="M.5 14.500H27.500M13.500 0V28"/></svg></div>
</section>

<footer class="taskbar">
  <div class="weather"><i class="sun"></i><div class="temp"><b>102°F</b><span>Sunny</span></div></div>
  <svg class="ic start" viewBox="30 78 87 87"><defs><linearGradient id="win" x1="0" y1="0" x2="1" y2="1"><stop offset="0" stop-color="#55d3ff"/><stop offset="1" stop-color="#0372cf"/></linearGradient></defs><path class="n" fill="url(#win)" d="M33 78H72V120H30V81ZM75 78H114L117 81V120H75ZM30 123H72V165H33L30 162ZM75 123H117V162L114 165H75Z"/></svg>
  <div class="search"><svg class="ic mag" viewBox="212 92 57 57"><circle cx="237" cy="116" r="22" stroke="#222" stroke-width="2"/><path stroke="#222" stroke-width="2.500" d="M252 132L267 147"/></svg><span>Search</span>
    <svg class="ic bird" viewBox="808 76 154 98"><ellipse class="n" cx="885" cy="164" rx="75" ry="8" fill="#c6774f"/><path stroke="#efb51b" stroke-width="2.500" d="M882 136L888 146L883 162L890 165M891 138L888 148M870 154L884 151"/><path class="n" fill="#28277d" d="M856 97Q860 112 872 106Q886 88 904 93Q929 104 926 136L915 127L902 141L873 135Q856 127 854 112Z"/><path class="n" fill="#65357a" d="M872 106Q886 88 896 94L884 128L864 124Z"/><path class="n" fill="#1faed1" d="M836 90Q846 78 857 87Q861 100 854 111L848 107L849 98L832 103Z"/><path class="n" fill="#a58e7a" d="M827 81L840 82L837 93L829 100Z"/><path stroke="#e24459" stroke-width="1.300" d="M855 110L859 120"/></svg>
  </div>
  <svg class="ic t" viewBox="1000.5 30 165 180"><path class="n" fill="#2d2d2b" d="M1040 101H1106V161H1038V103Z"/><rect class="n" x="1060" y="78" width="67" height="60" fill="#eee" opacity=".9"/><path class="n" fill="#b7b7b5" d="M1060 101H1106V138H1060Z"/></svg>
  <svg class="ic t" viewBox="1165.5 30 165 180"><circle class="n" cx="1252" cy="95" r="11" fill="#7b83eb"/><circle class="n" cx="1277" cy="97" r="8" fill="#5059c9"/><path class="n" fill="#5059c9" d="M1264 108H1287V128Q1285 140 1275 141L1264 139Z"/><path class="n" fill="#7b83eb" d="M1236 108H1269V138Q1265 153 1252 153Q1240 153 1236 140Z"/><path class="n" fill="#fff" d="M1209 98H1252V142H1209Z"/><path stroke="#4b53bc" stroke-width="2" d="M1220 109H1242M1231 109V134"/></svg>
  <svg class="ic t" viewBox="10.5 30 165 180"><path class="n" fill="#f58a0b" d="M60 143H124L130 161H54ZM86 80Q92 74 98 80L117 148Q92 158 67 148Z"/><path class="n" fill="#e5e5e5" d="M83 93H101L106 108Q92 115 79 108ZM75 123Q92 131 109 123L114 139Q92 148 71 139Z"/></svg>
  <svg class="ic t" viewBox="175.5 30 165 180"><path class="n" fill="#dc9c05" d="M214 82H238L249 88V98H213V84Z"/><path class="n" fill="#ffc83d" d="M213 99H241L252 92H303V159H213Z"/><path class="n" fill="#1680d5" d="M235 138H281Q287 140 288 159H228Q229 141 235 138Z"/><path stroke="#0b4f91" stroke-width="1.200" d="M240 149H276"/><rect class="bar" x="246" y="180" width="24" height="12" rx="6"/></svg>
  <svg class="ic t" viewBox="340.5 30 165 180"><path class="n" fill="#42484f" d="M423 76L462 97V141L423 162L384 141V97Z"/><path class="n" fill="#a0a7ad" d="M423 76L462 97L436 106L423 88ZM462 141L423 162L436 130Z"/><path class="n" fill="#717980" d="M384 97L423 76V88L397 128ZM462 97V141L436 106Z"/><path class="n" fill="#15191d" d="M422 91L439 130L397 132Z"/></svg>
  <svg class="ic t" viewBox="505.5 30 165 180"><defs><linearGradient id="asus" x1="0" y1="1" x2="1" y2="0"><stop offset="0" stop-color="#6a16ff"/><stop offset=".5" stop-color="#2b65f6"/><stop offset="1" stop-color="#00aef8"/></linearGradient></defs><path class="n" fill="url(#asus)" d="M543 75H633V165H543Z"/><path class="n" fill="#e3ecff" d="M554 140L574 98H582L562 140ZM569 140L589 98H597L577 140ZM585 140L605 97H614V140H607V134H596V128H607V110L593 140Z"/></svg>
  <svg class="ic t" viewBox="670.5 30 165 180"><defs><linearGradient id="ed" x1="0" y1="1" x2="1" y2="0"><stop offset="0" stop-color="#0567c2"/><stop offset=".5" stop-color="#25abe0"/><stop offset="1" stop-color="#6de35d"/></linearGradient></defs><path class="n" fill="url(#ed)" d="M708 120C708 95 728 75 754 75C780 75 798 96 798 117C798 130 787 138 771 136C757 134 762 129 762 122C762 111 752 108 742 109C729 113 725 125 728 138C732 155 747 160 770 160C742 171 708 151 708 120Z"/><path class="n" fill="#0c4f9e" d="M730 110C719 130 732 161 765 162C779 158 787 151 794 143C770 151 746 140 746 121C746 111 736 108 730 110Z"/><rect class="bar" x="741" y="180" width="24" height="12" rx="6"/></svg>
  <svg class="ic t" viewBox="835.5 30 165 180"><path stroke="#25bdef" stroke-width="2" d="M896 94V80H930"/><path class="n" fill="#164e84" d="M873 93H960V157Q958 165 950 165H882Q873 165 873 154Z"/><path class="n" fill="#f25022" d="M900 111h15v15h-15z"/><path class="n" fill="#7fba00" d="M918 111h15v15h-15z"/><path class="n" fill="#00a4ef" d="M900 129h15v15h-15z"/><path class="n" fill="#ffb900" d="M918 129h15v15h-15z"/><circle class="n" cx="951" cy="87" r="30" fill="#5d7381"/><text x="940" y="101" font-size="40" fill="#fff">1</text></svg>
  <svg class="ic t" viewBox="1000.5 30 165 180"><rect class="n" x="1038" y="75" width="90" height="90" rx="7" fill="#107c10"/><circle class="n" cx="1083" cy="120" r="37" fill="#fff"/><path class="n" fill="#107c10" d="M1056 90Q1068 83 1083 94Q1098 83 1110 90Q1098 91 1089 104Q1111 125 1114 146L1105 154Q1098 132 1083 117Q1068 132 1061 154L1052 146Q1055 125 1077 104Q1068 91 1056 90Z"/></svg>
  <svg class="ic t" viewBox="1165.5 30 165 180"><rect class="n" x="1176" y="48" width="144" height="144" rx="10" fill="#f0f7f6"/><path class="n" fill="#a43e00" d="M1284 80L1289 86V162L1284 165Z"/><path class="n" fill="#ff6b00" d="M1206 84L1215 75H1280Q1284 75 1284 80V138H1215V160L1206 153Z"/><path class="n" fill="#7d330b" d="M1215 138H1288V165H1215Z"/><path stroke="#fff" stroke-width="2.700" d="M1245 125V93H1263M1245 108H1261"/><text x="1234" y="158" fill="#fff" font-size="19" font-weight="700" textLength="36">FUS</text><rect class="n" x="1218" y="180" width="60" height="12" rx="6" fill="#5d7584"/></svg>
  <div class="tray">
    <svg class="ic" style="width:60px" viewBox="104 30 180 180"><path stroke="#222" stroke-width="2" d="M105 130L124 111L142 130"/><path fill="#ccc" stroke="#222" stroke-width="1.500" d="M226 136C208 135 211 111 227 111C235 90 260 98 260 112C276 113 276 136 260 136Z"/><path stroke="#222" stroke-width="1.800" d="M219 97L268 144"/></svg>
    <div class="lang">ENG<br>IN</div>
    <svg class="ic" style="width:84px" viewBox="494 30 252 180"><path stroke="#222" stroke-width="1.500" d="M499 111Q528 86 557 111M506 119Q528 100 550 119M514 127Q528 115 542 127"/><circle class="n" cx="528" cy="134" r="5" fill="#222"/><path stroke="#222" stroke-width="1.400" d="M589 112H598L611 101V139L598 129H589ZM624 111L643 131M643 111L624 131M694 104H727Q732 104 732 111V132Q732 138 726 138H687Q680 138 680 130V121M735 116V126"/><path class="n" fill="#222" d="M688 92L678 108H687L682 119L697 103H689L696 92ZM684 132L704 109V132Z"/></svg>
    <div class="clock">1:06 PM<br>4/21/2024</div>
    <svg class="ic" style="width:82px" viewBox="1039 30 246 180"><path class="n" fill="#30414e" d="M1041 138Q1048 133 1048 119Q1047 94 1065 94Q1083 94 1082 119Q1083 133 1089 138V142H1041ZM1056 145H1074Q1066 155 1056 145Z"/><defs><linearGradient id="cp" x1="0" y1="0" x2="0" y2="1"><stop offset="0" stop-color="#1b98ec"/><stop offset=".5" stop-color="#3fbf9b"/><stop offset="1" stop-color="#f2d12d"/></linearGradient><linearGradient id="cq" x1="1" y1="0" x2="0" y2="1"><stop offset="0" stop-color="#9754ec"/><stop offset="1" stop-color="#ff6b60"/></linearGradient></defs><path class="n" fill="url(#cp)" d="M1178 81H1208Q1220 82 1221 101H1202L1190 137H1165Q1155 135 1159 119L1167 91Q1170 82 1178 81Z"/><path class="n" fill="#1a55cc" d="M1197 81H1210Q1219 83 1221 101H1199Z"/><path class="n" fill="url(#cq)" d="M1214 102H1235Q1246 103 1242 119L1236 138H1203Z"/><rect class="n" x="1179" y="138" width="67" height="27" rx="7" fill="#fcc60b"/><text x="1187" y="160" fill="#222" font-size="23" font-weight="700" textLength="52">PRE</text></svg>
  </div>
</footer>
</body>
</html>
```
FILE: styles.css
```css
* { box-sizing: border-box; }
body { margin: 0; width: 1920px; height: 1080px; overflow: hidden; display: flex; flex-direction: column; font-family: "Liberation Sans", Arial, sans-serif; color: #333; background: #a5a5a5; }
.ic { display: block; flex: none; fill: none; stroke: #666; stroke-width: 1.5; overflow: visible; }
.ic * { vector-effect: non-scaling-stroke; }
.ic .n, .ic text { stroke: none; }
.dk { fill: #5f5f5f; }

.titlebar { height: 29px; flex: none; display: flex; align-items: center; background: #eff4f8; padding: 0 4px 0 3px; }
.app { width: 18px; height: 21px; }
.title { margin: 0 auto 0 7px; font: 14px "Noto Sans", sans-serif; letter-spacing: .03px; color: #111; white-space: nowrap; }
.wc { width: 58px; height: 29px; stroke: #111; stroke-width: 1.3; }

.tabbar { height: 40px; flex: none; display: flex; align-items: flex-end; background: #cbcbcb; }
.q { height: 40px; }
.tab { height: 35px; background: #b9b9b9; border-radius: 5px 5px 0 0; display: flex; align-items: center; font-size: 15px; color: #666; white-space: nowrap; }
.home { width: 49px; align-items: flex-end; margin-right: 5px; }
.t1 { width: 640px; padding: 2px 9px 0 228px; margin-right: 5px; }
.t2 { width: 640px; padding: 2px 9px 0 260px; margin-right: 5px; background: #f2f2f2; color: #333; letter-spacing: -.1px; }
.cube { width: 18px; height: 19px; margin-right: 6px; }
.sheet { width: 20px; height: 17px; margin-right: 5px; }
.x { width: 11px; height: 11px; margin: 0 0 2px auto; stroke: #777; }
.plus { width: 34px; align-items: flex-end; }
.first { margin-left: 5px; }
.avatar { width: 30px; height: 30px; margin: 0 0 5px 16px; }

.ribbon { height: 106px; flex: none; display: flex; flex-direction: column; background: #f2f2f2; border-bottom: 3px solid #f2f2f2; box-shadow: inset 0 -1px #c8c8c8; }
.modes { height: 30px; display: flex; padding-left: 37px; font-size: 14px; line-height: 29px; }
.mode { width: 96px; text-align: center; letter-spacing: -.1px; margin-right: 22px; }
.mode.on { height: 30px; color: #0696d7; font-weight: 700; letter-spacing: -.3px; border-bottom: 3px solid #0696d7; }
.groups { display: flex; padding-top: 3px; }
.group { height: 64px; border-right: 1px solid #c8c8c8; display: flex; flex-direction: column; }
.icons { display: flex; gap: 13.7px; }
.icons .ic { width: 40px; height: 42px; }
.label { margin-top: 6px; text-align: center; font-size: 14px; line-height: 16px; letter-spacing: -.5px; padding-right: 4px; white-space: nowrap; }
.label::after { content: ""; display: inline-block; margin: 0 0 3px 5px; border: 4px solid transparent; border-width: 6px 3.5px 0; border-top-color: #333; }
.g-create { width: 493px; } .g-create .icons { padding-left: 10px; } .g-create .label { padding-right: 8px; }
.g-modify { width: 121px; } .g-modify .icons { padding-left: 15px; }
.g-geo { width: 228px; } .g-geo .icons { padding-left: 14px; }
.g-dim { width: 229px; } .g-dim .icons { padding-left: 15.5px; }
.g-text { width: 176px; } .g-text .icons { padding-left: 15px; gap: 13.4px; } .g-text .label { padding-right: 2px; }
.g-sym { width: 282px; } .g-sym .icons { padding-left: 15px; }
.g-ins { width: 93px; } .g-ins .icons { padding-left: 27px; } .g-ins .label { padding: 0 0 0 2px; }
.g-tab { width: 121px; } .g-tab .icons { padding-left: 14px; } .g-tab .label { padding-right: 4px; }
.g-exp { width: 99px; border: 0; } .g-exp .icons { padding-left: 29px; } .g-exp .label { padding-right: 0; }

.canvas { position: relative; height: 782px; flex: none; display: flex; background: #a5a5a5; }
.side { width: 451px; padding: 5px 0 5px 5px; display: flex; flex-direction: column; }
.panel { width: 375px; height: 31px; flex: none; display: flex; align-items: center; background: #f2f2f2; border: 1px solid #ccc; border-bottom-width: 2px; font-size: 14px; color: #666; }
.rew { width: 13px; height: 9px; margin: 0 12px 0 5px; }
.dot { width: 13px; height: 13px; margin: 0 13px 0 auto; }
.comments { margin-top: auto; padding-left: 30px; }
.tree { padding-top: 6px; }
.row { height: 26px; margin-bottom: 4px; display: flex; align-items: center; }
.l0 { padding-left: 22px; } .l1 { padding-left: 44.500px; } .l2 { padding-left: 67px; } .l3 { padding-left: 89px; }
.ar { width: 11px; height: 12px; margin-right: 11.500px; stroke-width: 1.1; }
.node { height: 26px; display: flex; align-items: center; background: #f2f2f2; border: 1px solid #cfcfcf; border-width: 1px 0; box-shadow: 0 0 4px #b8b8b8; font-size: 14px; letter-spacing: -.12px; white-space: nowrap; }
.ni { width: 31px; height: 26px; margin-right: 11px; box-shadow: 1px 0 #e2e2e2; }
.f .ni { margin-right: 0; }
.fo { width: 31px; height: 26px; margin-right: 11px; }
.paper { width: 1018px; height: 720px; margin-top: 31px; background: #fff; stroke: #000; stroke-width: 1.15; }
.paper .c, .frame { stroke-width: 1; }
.paper .k { stroke-width: 1.4; }
.marks { fill: #000; text-anchor: middle; font-size: 9px; }
.viewnav { position: absolute; left: 911px; top: 748px; width: 98px; height: 30px; background: #f0f0f0; display: flex; gap: 3px; }
.viewnav .ic { width: 29px; height: 30px; }

.sheets { height: 63px; flex: none; background: #f0f0f0; border-top: 1px solid #c8c8c8; display: flex; padding: 14px; gap: 5px; }
.thumb { width: 55px; height: 42px; border: 4px solid #0696d7; border-bottom-width: 3px; background: #fff; }
.thumb .ic { width: 47px; height: 35px; }
.add { width: 55px; height: 42px; background: #f2f2f2; display: flex; align-items: center; justify-content: center; }
.add .ic { width: 27px; height: 28px; }

.taskbar { height: 60px; flex: none; display: flex; align-items: center; box-shadow: inset 0 1px #b1b8b7; font-family: "Noto Sans", sans-serif; background: linear-gradient(90deg, #e0eaf0 0, #e2eced 190px, #dfe1da 300px, #dce1db 480px, #d8dfda 580px, #d8edea 850px, #d5ebe6 1000px, #d7ebe7 1200px, #d9e2df 1310px, #d5ebe5 1490px, #dbf0ed 1650px, #e2eaee 1800px, #e4ebef 1920px); }
.weather { width: 530px; padding-left: 27px; display: flex; align-items: center; gap: 12px; font-size: 14px; line-height: 20px; letter-spacing: -.2px; }
.temp { padding-bottom: 2px; }
.weather b, .weather span { display: block; font-weight: 400; }
.weather b { color: #222; } .weather span { color: #666; }
.sun { width: 25px; height: 25px; border-radius: 50%; background: linear-gradient(135deg, #f1bd38, #f0610b); }
.start { width: 29px; height: 29px; }
.search { width: 274px; height: 39px; margin: 0 3.500px 0 17px; border: 1px solid #c3ccca; border-radius: 20px; background: #f5f9f8; display: flex; align-items: center; padding-left: 14px; font-size: 16px; letter-spacing: .1px; color: #5a5a5a; }
.mag { width: 19px; height: 19px; margin-right: 12px; }
.bird { width: 52px; height: 33px; margin: 0 9px 0 auto; }
.t { width: 55px; height: 60px; }
.bar { stroke: none; fill: #7e8a89; }
.tray { margin-left: 111px; display: flex; align-items: center; font-size: 14.5px; line-height: 20px; color: #222; letter-spacing: -.15px; }
.tray .ic { height: 60px; }
.lang { width: 50px; text-align: center; padding: 0 0 1px 6px; margin: 0 14px 0 6px; }
.clock { width: 90px; text-align: right; padding-bottom: 1px; margin: 0 11px 0 -2px; letter-spacing: 0; white-space: nowrap; }
```
